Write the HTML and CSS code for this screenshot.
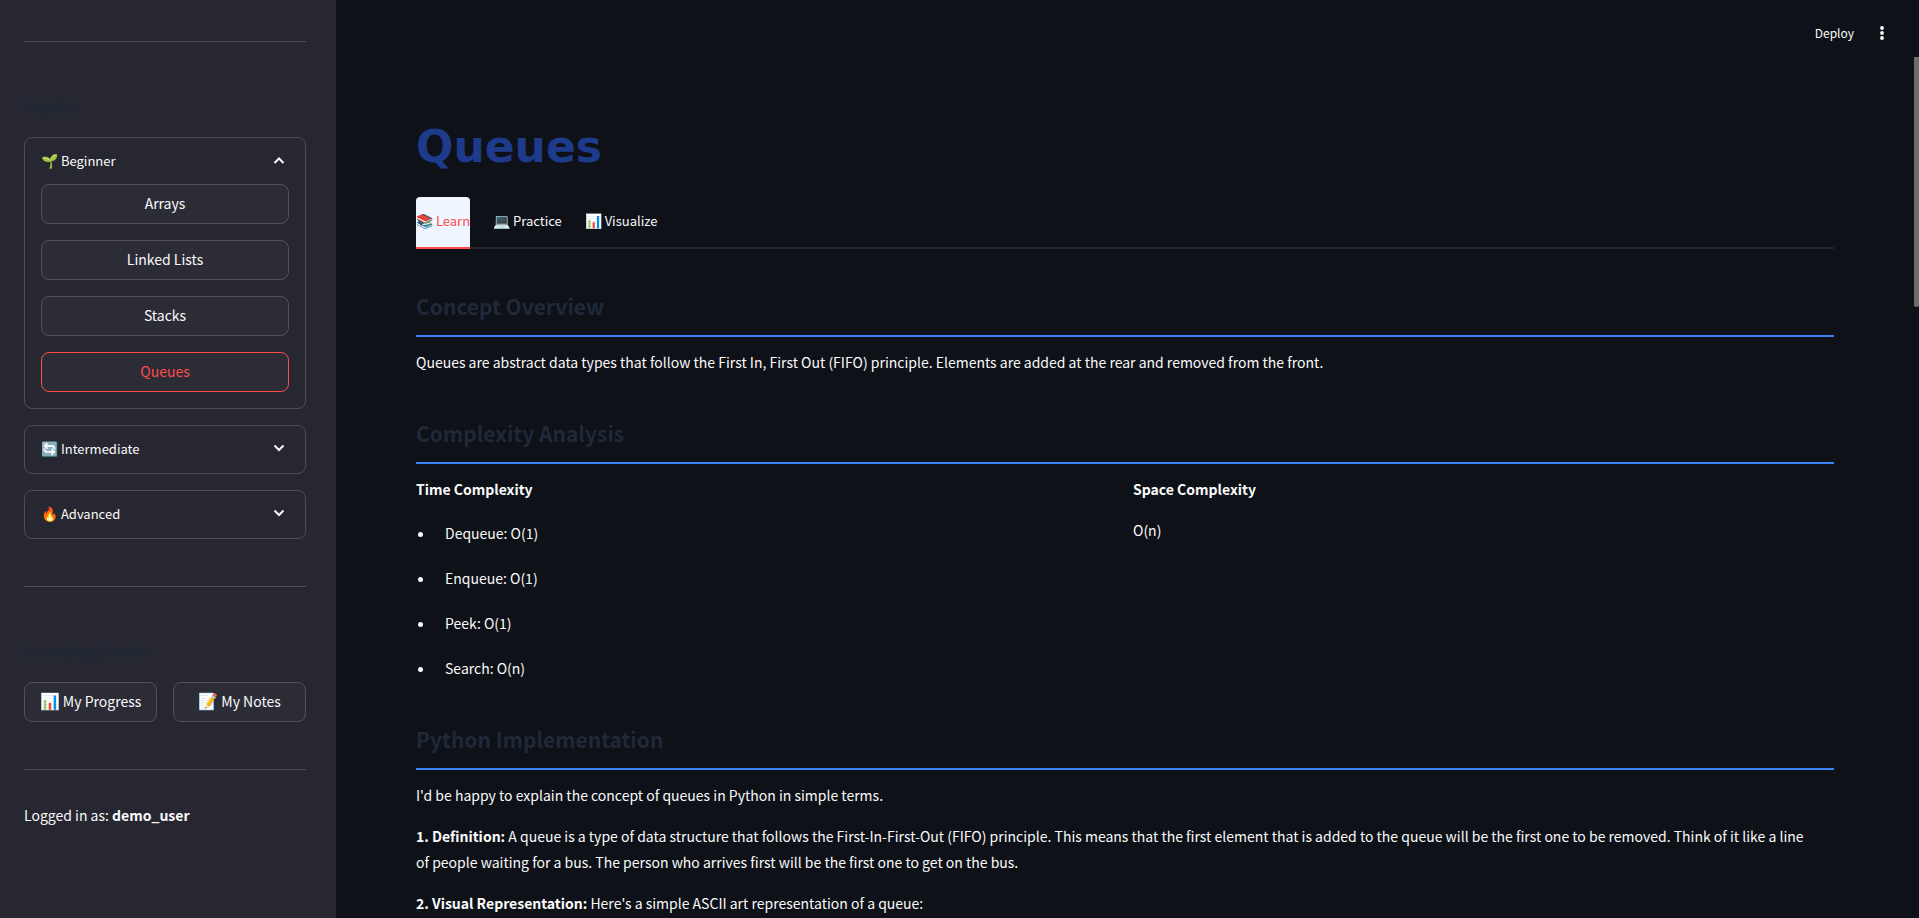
FILE: index.html
```html
<!DOCTYPE html>
<html lang="en">
<head>
<meta charset="utf-8">
<title>Queues</title>
<link rel="stylesheet" href="styles.css">
</head>
<body>
<div class="app">
  <aside class="sidebar">
    <hr class="rule">
    <h3 class="side-title">Topics</h3>
    <div class="topics">
      <section class="expander">
        <button class="summary open" type="button" aria-expanded="true">
          <span class="label"><span class="emoji">🌱</span> Beginner</span>
          <svg class="chevron" viewBox="0 0 20 20"><path d="M5.500 12l4.500-4.500L14.500 12"/></svg>
        </button>
        <div class="panel">
          <button class="btn" type="button">Arrays</button>
          <button class="btn" type="button">Linked Lists</button>
          <button class="btn" type="button">Stacks</button>
          <button class="btn current" type="button">Queues</button>
        </div>
      </section>
      <section class="expander">
        <button class="summary" type="button" aria-expanded="false">
          <span class="label"><span class="emoji">🔄</span> Intermediate</span>
          <svg class="chevron" viewBox="0 0 20 20"><path d="M5.500 6.500l4.500 4.500L14.500 6.500"/></svg>
        </button>
      </section>
      <section class="expander">
        <button class="summary" type="button" aria-expanded="false">
          <span class="label"><span class="emoji">🔥</span> Advanced</span>
          <svg class="chevron" viewBox="0 0 20 20"><path d="M5.500 6.500l4.500 4.500L14.500 6.500"/></svg>
        </button>
      </section>
    </div>
    <hr class="rule tools-rule">
    <h3 class="side-title">Learning Tools</h3>
    <div class="tools">
      <button class="btn" type="button"><span class="emoji">📊</span> My Progress</button>
      <button class="btn" type="button"><span class="emoji">📝</span> My Notes</button>
    </div>
    <hr class="rule user-rule">
    <p class="user">Logged in as: <strong>demo_user</strong></p>
  </aside>
  <div class="page">
    <header class="toolbar">
      <button class="deploy" type="button">Deploy</button>
      <button class="menu" type="button" aria-label="Main menu">
        <svg viewBox="0 0 20 20"><circle cx="10" cy="5" r="1.900"/><circle cx="10" cy="10" r="1.900"/><circle cx="10" cy="15" r="1.900"/></svg>
      </button>
    </header>
    <main class="content">
      <h1 class="title">Queues</h1>
      <div class="tabs" role="tablist">
        <button class="tab selected" type="button" role="tab" aria-selected="true"><span class="emoji">📚</span> Learn</button>
        <button class="tab" type="button" role="tab" aria-selected="false"><span class="emoji">💻</span> Practice</button>
        <button class="tab" type="button" role="tab" aria-selected="false"><span class="emoji">📊</span> Visualize</button>
      </div>
      <section class="block">
        <h2 class="heading">Concept Overview</h2>
        <p class="text">Queues are abstract data types that follow the First In, First Out (FIFO) principle. Elements are added at the rear and removed from the front.</p>
      </section>
      <section class="block">
        <h2 class="heading">Complexity Analysis</h2>
        <div class="columns">
          <div>
            <p class="text"><strong>Time Complexity</strong></p>
            <ul class="costs">
              <li>Dequeue: O(1)</li>
              <li>Enqueue: O(1)</li>
              <li>Peek: O(1)</li>
              <li>Search: O(n)</li>
            </ul>
          </div>
          <div>
            <p class="text"><strong>Space Complexity</strong></p>
            <p class="text">O(n)</p>
          </div>
        </div>
      </section>
      <section class="block">
        <h2 class="heading">Python Implementation</h2>
        <p class="text">I'd be happy to explain the concept of queues in Python in simple terms.</p>
        <p class="text"><strong>1. Definition:</strong> A queue is a type of data structure that follows the First-In-First-Out (FIFO) principle. This means that the first element that is added to the queue will be the first one to be removed. Think of it like a line of people waiting for a bus. The person who arrives first will be the first one to get on the bus.</p>
        <p class="text"><strong>2. Visual Representation:</strong> Here's a simple ASCII art representation of a queue:</p>
      </section>
    </main>
    <div class="scroll-thumb"></div>
  </div>
</div>
</body>
</html>
```
FILE: styles.css
```css
* {
  box-sizing: border-box;
}

body {
  margin: 0;
  background: #0e1117;
  color: #fafafa;
  font: 14px/26px "Noto Sans CJK SC", "Open Sans", sans-serif;
}

button {
  margin: 0;
  padding: 0;
  border: 0;
  background: none;
  color: inherit;
  font: inherit;
  cursor: pointer;
}

h1, h2, h3, p, ul, hr {
  margin: 0;
}

.app {
  display: grid;
  grid-template-columns: 336px minmax(0, 1fr);
  height: 100vh;
  overflow: hidden;
}

.sidebar {
  padding: 41px 30px 0 24px;
  background: #262730;
}

.rule {
  height: 1px;
  border: 0;
  background: #4c4d56;
}

.side-title {
  padding: 48px 0 16px;
  color: #1f2937;
  font-size: 17px;
  line-height: 31px;
}

.topics {
  display: grid;
  gap: 16px;
}

.expander {
  border: 1px solid #4c4d56;
  border-radius: 8px;
}

.summary {
  display: flex;
  align-items: center;
  justify-content: space-between;
  width: 100%;
  padding: 12px 16px 13px;
  font-size: 13px;
  line-height: 22px;
}

.open {
  padding-bottom: 12px;
}

.summary .emoji,
.tab .emoji {
  font-size: 14px;
}

.emoji {
  font-size: 16px;
  line-height: 1;
}

.chevron {
  width: 20px;
  height: 20px;
  fill: none;
  stroke: #fafafa;
  stroke-width: 2;
}

.panel {
  display: grid;
  gap: 16px;
  padding: 0 16px 16px;
}

.btn {
  height: 40px;
  padding-bottom: 2px;
  border: 1px solid #51525b;
  border-radius: 8px;
  background: #2b2c36;
  white-space: nowrap;
}

.current {
  border-color: #ff4b4b;
  color: #ff4b4b;
}

.tools-rule,
.user-rule {
  margin-top: 47px;
}

.tools {
  display: grid;
  grid-template-columns: 1fr 1fr;
  gap: 16px;
}

.user {
  padding-top: 32px;
}

.page {
  position: relative;
  overflow: hidden;
}

.toolbar {
  display: flex;
  align-items: center;
  justify-content: flex-end;
  gap: 18px;
  height: 66px;
  padding-right: 27px;
}

.deploy {
  font-size: 12px;
}

.menu {
  display: flex;
}

.menu svg {
  width: 20px;
  height: 20px;
  fill: #fafafa;
}

.content {
  padding: 53px 85px 0 80px;
}

.title {
  color: #1e3a8a;
  font: bold 44px/56px "DejaVu Sans", sans-serif;
}

.tabs {
  display: flex;
  gap: 23px;
  margin-top: 22px;
  box-shadow: inset 0 -2px #26272b;
}

.tab {
  height: 52px;
  padding-bottom: 2px;
  border-bottom: 2px solid transparent;
  font-size: 13px;
  white-space: nowrap;
}

.selected {
  border-color: #ff4b4b;
  border-radius: 4px 4px 0 0;
  background: #eff6ff;
  color: #ff4b4b;
}

.block {
  padding-top: 41px;
}

.block + .block {
  padding-top: 42px;
}

.heading {
  margin-bottom: 12px;
  padding-bottom: 12px;
  border-bottom: 2px solid #3b82f6;
  color: #1f2937;
  font-size: 21px;
  line-height: 33px;
}

.text {
  padding-right: 24px;
}

.text + .text {
  margin-top: 15px;
}

.columns {
  display: grid;
  grid-template-columns: 1fr 1fr;
  gap: 16px;
}

.costs {
  display: grid;
  gap: 19px;
  margin-top: 18px;
  padding-left: 19px;
}

.costs li {
  padding-left: 10px;
}

.scroll-thumb {
  position: absolute;
  top: 57px;
  right: 0;
  width: 5px;
  height: 250px;
  border-radius: 0 0 3px 3px;
  background: #6c6d71;
}
```
